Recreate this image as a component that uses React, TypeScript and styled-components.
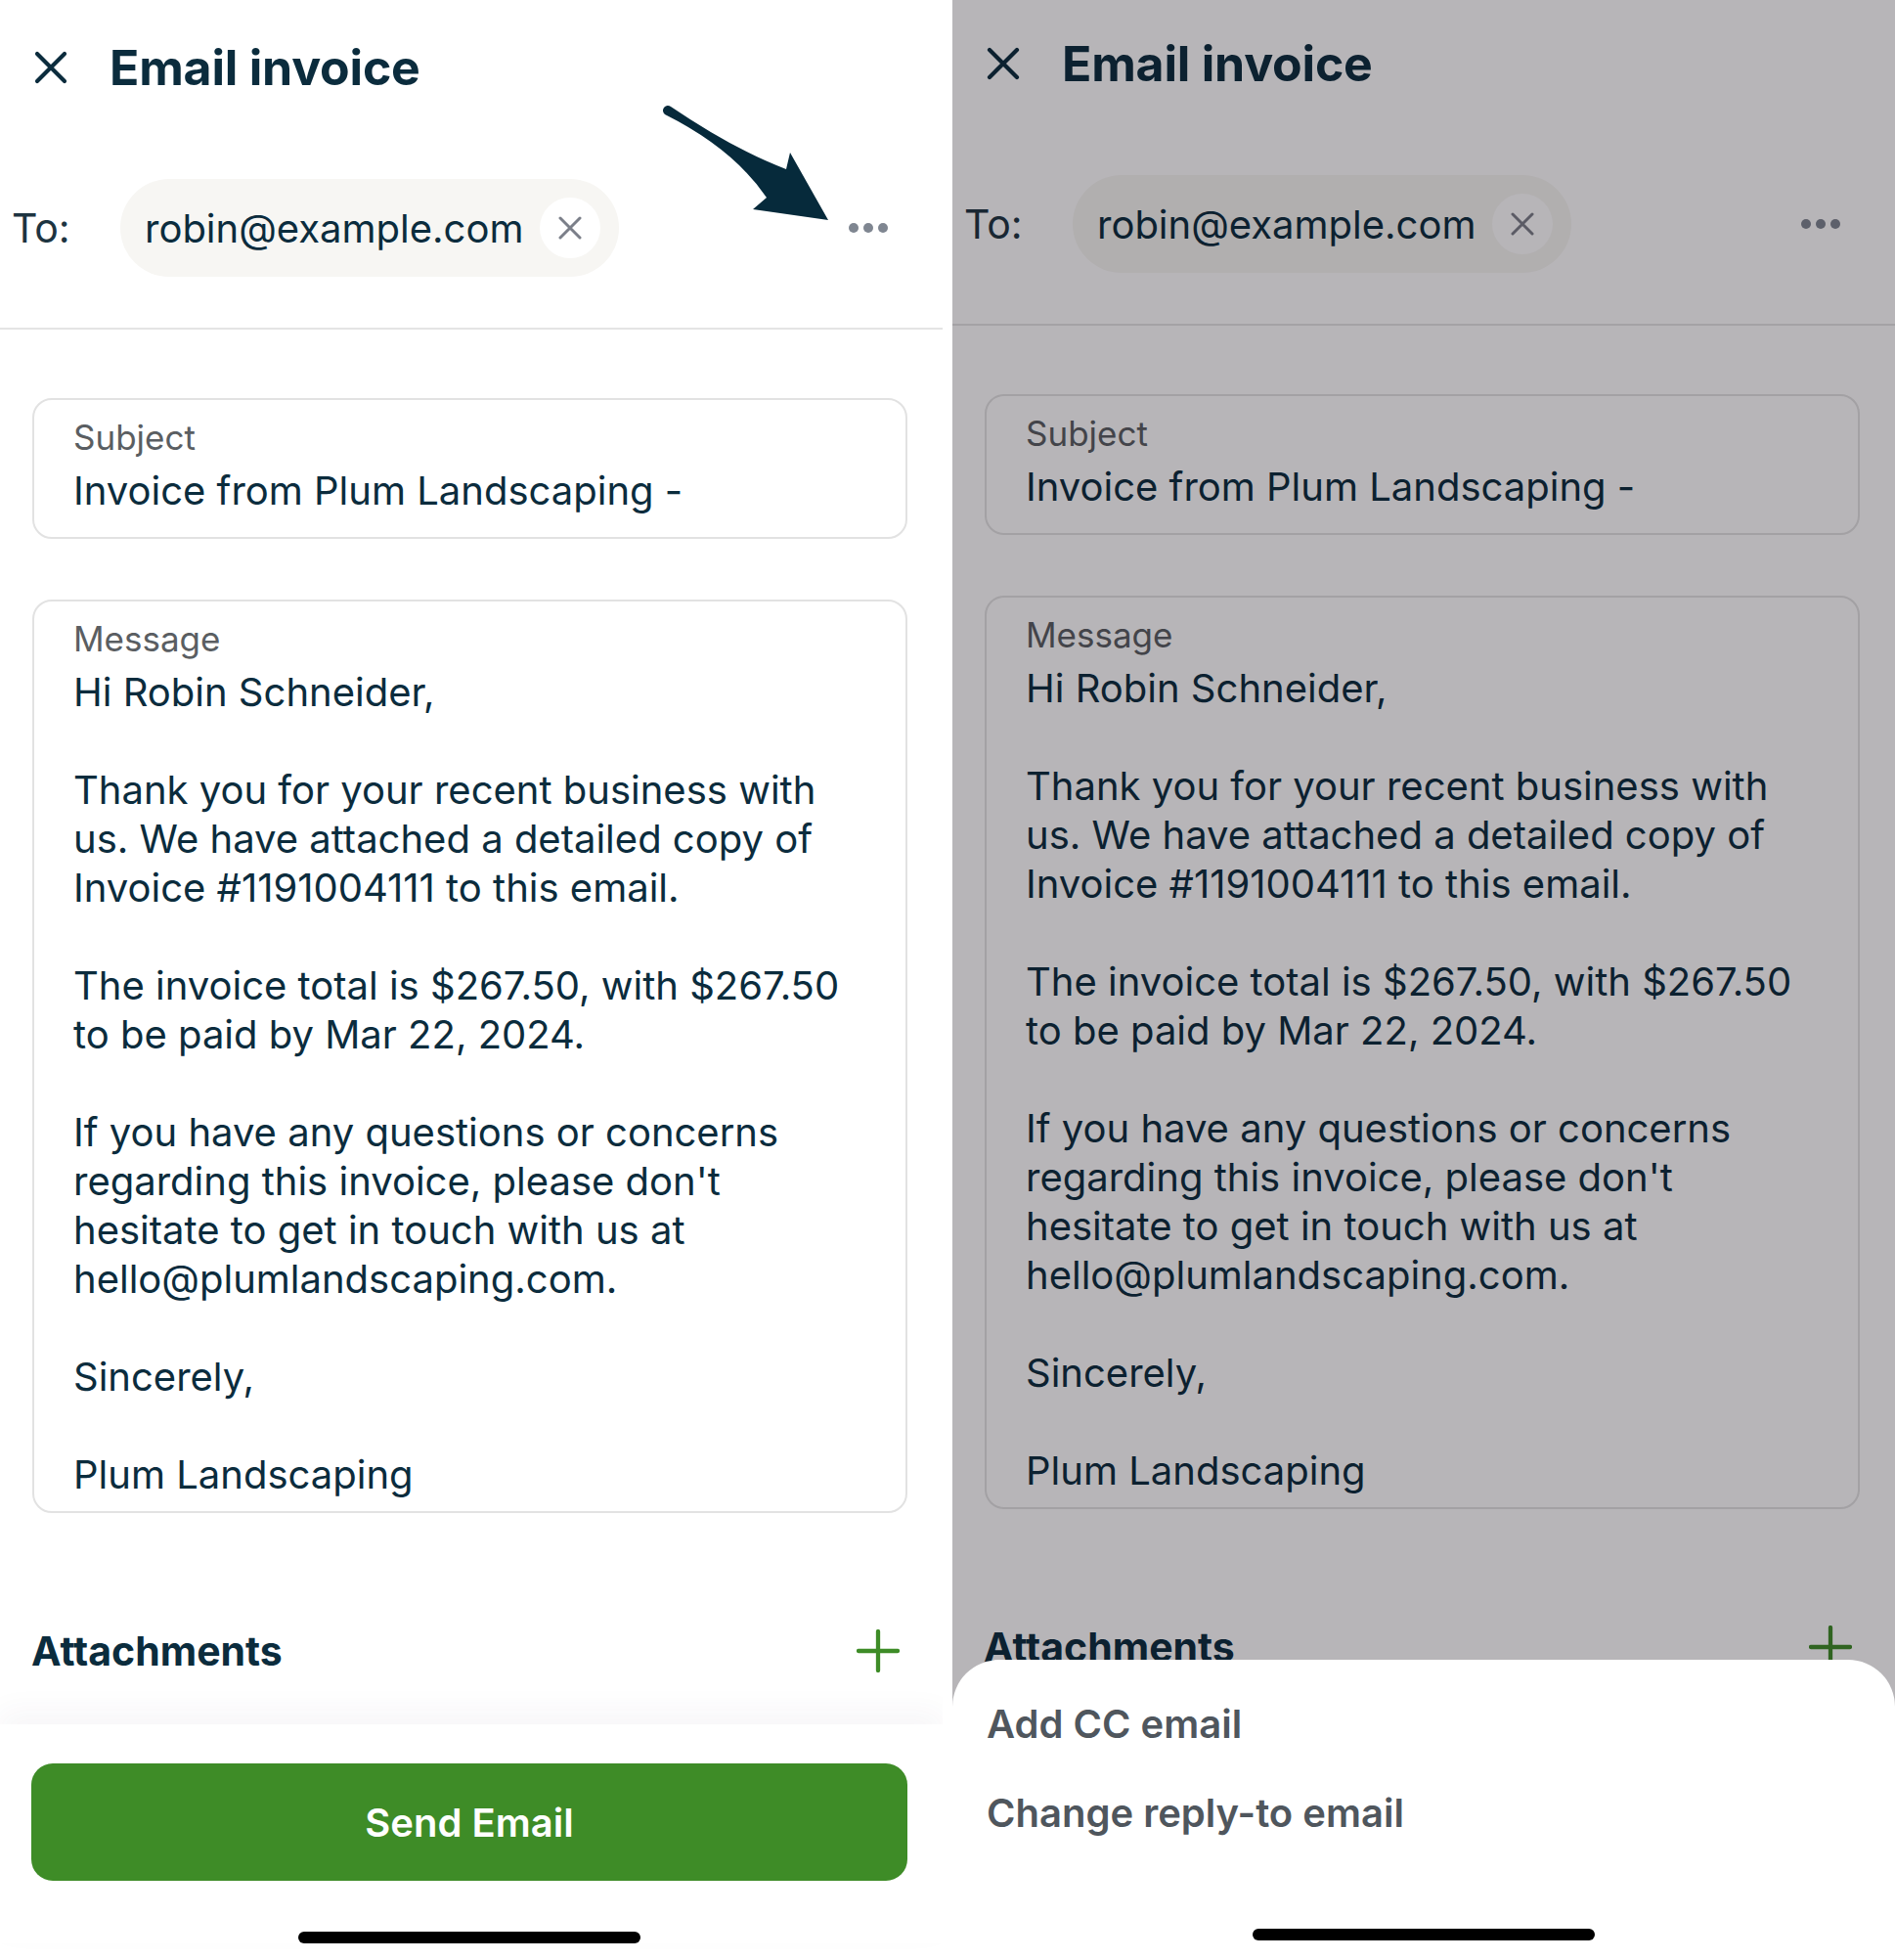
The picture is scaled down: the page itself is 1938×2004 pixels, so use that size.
import React from "react";
import styled, { createGlobalStyle } from "styled-components";

const NAVY = "#0b2c3d";
const GREEN = "#3e8c27";

const GlobalStyle = createGlobalStyle`
  html, body {
    margin: 0;
    padding: 0;
    background: #ffffff;
  }
  body {
    font-family: Inter, "Noto Sans", sans-serif;
    -webkit-font-smoothing: antialiased;
  }
  * {
    box-sizing: border-box;
  }
`;

const MESSAGE: string[][] = [
  ["Hi Robin Schneider,"],
  [
    "Thank you for your recent business with",
    "us. We have attached a detailed copy of",
    "Invoice #1191004111 to this email.",
  ],
  ["The invoice total is $267.50, with $267.50", "to be paid by Mar 22, 2024."],
  [
    "If you have any questions or concerns",
    "regarding this invoice, please don't",
    "hesitate to get in touch with us at",
    "hello@plumlandscaping.com.",
  ],
  ["Sincerely,"],
  ["Plum Landscaping"],
];

const SHEET_OPTIONS = ["Add CC email", "Change reply-to email"];

const CloseIcon = () => (
  <svg width="34" height="34" viewBox="0 0 34 34" fill="none">
    <path
      d="M3 3 L31 31 M31 3 L3 31"
      stroke={NAVY}
      strokeWidth="4.2"
      strokeLinecap="round"
    />
  </svg>
);

const SmallClose = () => (
  <svg width="24" height="24" viewBox="0 0 24 24" fill="none">
    <path
      d="M2 2 L22 22 M22 2 L2 22"
      stroke="#7b7f89"
      strokeWidth="3"
      strokeLinecap="round"
    />
  </svg>
);

const PlusIcon = () => (
  <svg width="44" height="44" viewBox="0 0 44 44" fill="none">
    <path
      d="M22 2 L22 42 M2 22 L42 22"
      stroke={GREEN}
      strokeWidth="4.3"
      strokeLinecap="round"
    />
  </svg>
);

// hand-drawn annotation arrow pointing at the "more" dots
const PointerArrow = () => (
  <ArrowSvg width="190" height="135" viewBox="670 100 190 135">
    <path
      d="M686 109 Q751 153 804 173 L808 156 L847 225 L770 214 L784 202 Q750 152 680 117 A4.2 4.2 0 0 1 686 109 Z"
      fill="#062a3b"
    />
  </ArrowSvg>
);

interface ScreenProps {
  top: number;
  covered?: boolean;
}

const EmailScreen = ({ top, covered }: ScreenProps) => (
  <>
    <Header $top={top}>
      <CloseIcon />
      <Title>Email invoice</Title>
    </Header>

    <ToRow>
      <ToLabel>To:</ToLabel>
      <Chip>
        <ChipText>robin@example.com</ChipText>
        <ChipClose>
          <SmallClose />
        </ChipClose>
      </Chip>
      <MoreDots>
        <Dot />
        <Dot />
        <Dot />
      </MoreDots>
    </ToRow>

    <Divider />

    <Fields>
      <FieldBox $bottom={22}>
        <FieldLabel>Subject</FieldLabel>
        <FieldValue>Invoice from Plum Landscaping -</FieldValue>
      </FieldBox>
      <FieldBox $bottom={12} $gap={62}>
        <FieldLabel>Message</FieldLabel>
        <FieldValue>
          {MESSAGE.map((para, i) => (
            <Paragraph key={i}>
              {para.map((line) => (
                <Line key={line}>{line}</Line>
              ))}
            </Paragraph>
          ))}
        </FieldValue>
      </FieldBox>
    </Fields>

    <AttachmentsRow>
      <SectionTitle>Attachments</SectionTitle>
      <PlusIcon />
    </AttachmentsRow>

    {/* the action sheet hides the footer on the dimmed screen */}
    {!covered && (
      <Footer>
        <SendButton>Send Email</SendButton>
        <HomeBar $top={52} />
      </Footer>
    )}
  </>
);

export default function App() {
  return (
    <>
      <GlobalStyle />
      <Page>
        <Panel>
          <EmailScreen top={35} />
          <PointerArrow />
        </Panel>
        <Panel>
          <EmailScreen top={31} covered />
          <Overlay />
          <Sheet>
            {SHEET_OPTIONS.map((option) => (
              <SheetItem key={option}>{option}</SheetItem>
            ))}
            <HomeBar $top={73} />
          </Sheet>
        </Panel>
      </Page>
    </>
  );
}

const Page = styled.div`
  display: flex;
  gap: 10px;
  width: 1938px;
  height: 2004px;
  overflow: hidden;
  background: #ffffff;
`;

const Panel = styled.div`
  position: relative;
  flex: none;
  width: 964px;
  height: 2004px;
  overflow: hidden;
  background: #ffffff;
  display: flex;
  flex-direction: column;
`;

const Header = styled.div<{ $top: number }>`
  display: flex;
  align-items: center;
  height: 68px;
  margin-top: ${(p) => p.$top}px;
  padding-left: 35px;
`;

const Title = styled.h1`
  margin: 0 0 0 43px;
  font-size: 50px;
  font-weight: 700;
  line-height: 68px;
  color: ${NAVY};
  letter-spacing: -0.2px;
`;

const ToRow = styled.div`
  display: flex;
  align-items: center;
  height: 100px;
  margin-top: 80px;
  padding: 0 56px 0 12px;
`;

const ToLabel = styled.span`
  width: 111px;
  font-size: 41px;
  line-height: 100px;
  color: #1d3441;
`;

const Chip = styled.div`
  display: flex;
  align-items: center;
  gap: 17px;
  height: 100px;
  padding: 0 19px 0 25px;
  border-radius: 50px;
  background: #f7f6f3;
`;

const ChipText = styled.span`
  font-size: 40px;
  color: ${NAVY};
`;

const ChipClose = styled.span`
  display: flex;
  align-items: center;
  justify-content: center;
  width: 62px;
  height: 62px;
  border-radius: 50%;
  background: #ffffff;
`;

const MoreDots = styled.div`
  display: flex;
  gap: 5px;
  margin-left: auto;
`;

const Dot = styled.span`
  width: 10px;
  height: 10px;
  border-radius: 50%;
  background: #7f8691;
`;

const Divider = styled.div`
  height: 2px;
  margin-top: 52px;
  background: #e4e4e4;
`;

const Fields = styled.div`
  display: flex;
  flex-direction: column;
  padding: 0 36px 0 33px;
  margin-top: 70px;
`;

const FieldBox = styled.div<{ $bottom: number; $gap?: number }>`
  margin-top: ${(p) => p.$gap ?? 0}px;
  padding: 18px 40px ${(p) => p.$bottom}px 40px;
  border: 2px solid #e2e2e2;
  border-radius: 20px;
`;

const FieldLabel = styled.div`
  font-size: 35px;
  line-height: 40px;
  color: #5a5e62;
`;

const FieldValue = styled.div`
  margin-top: 10px;
  font-size: 40px;
  line-height: 50px;
  color: ${NAVY};
`;

const Paragraph = styled.div`
  & + & {
    margin-top: 50px;
  }
`;

const Line = styled.div`
  white-space: nowrap;
`;

const AttachmentsRow = styled.div`
  display: flex;
  align-items: center;
  justify-content: space-between;
  height: 60px;
  margin-top: 111px;
  padding: 0 44px 0 32px;
`;

const SectionTitle = styled.h2`
  margin: 0;
  font-size: 41px;
  font-weight: 700;
  line-height: 60px;
  color: ${NAVY};
`;

const Footer = styled.div`
  display: flex;
  flex-direction: column;
  margin-top: 45px;
  padding: 40px 36px 0 32px;
  background: #ffffff;
  box-shadow: 0 -14px 28px rgba(70, 50, 90, 0.045);
`;

const SendButton = styled.button`
  height: 120px;
  border: none;
  border-radius: 22px;
  background: ${GREEN};
  color: #ffffff;
  font-family: inherit;
  font-size: 40px;
  font-weight: 600;
`;

const HomeBar = styled.div<{ $top: number }>`
  width: 350px;
  height: 12px;
  margin: ${(p) => p.$top}px auto 0;
  border-radius: 6px;
  background: #000000;
`;

const ArrowSvg = styled.svg`
  position: absolute;
  left: 670px;
  top: 100px;
`;

const Overlay = styled.div`
  position: absolute;
  inset: 0;
  background: rgba(18, 11, 21, 0.3);
`;

const Sheet = styled.div`
  position: absolute;
  left: 0;
  right: 0;
  bottom: 0;
  height: 307px;
  display: flex;
  flex-direction: column;
  padding: 20px 35px 0;
  background: #ffffff;
  border-radius: 48px 48px 0 0;
`;

const SheetItem = styled.div`
  height: 91px;
  font-size: 40px;
  font-weight: 600;
  line-height: 91px;
  color: #4f565d;
`;
